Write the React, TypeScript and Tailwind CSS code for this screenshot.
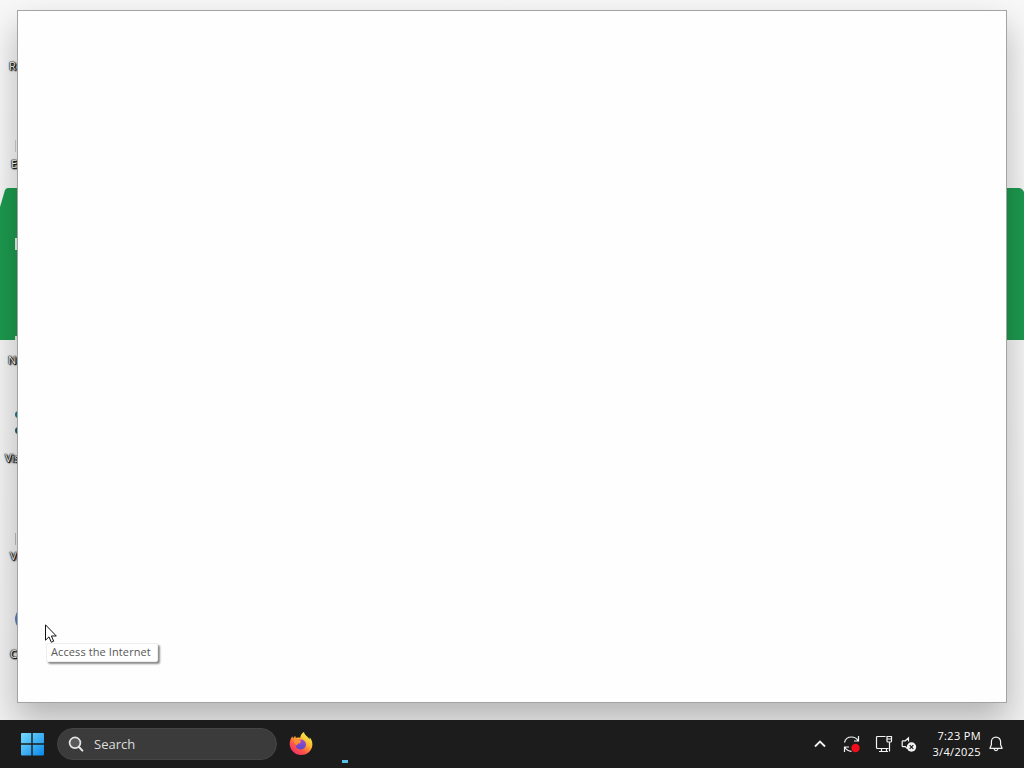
type DesktopLabel = {
  text: string;
  className: string;
};

const labels: DesktopLabel[] = [
  { text: 'Recycle Bin', className: 'left-[9px] top-[59px]' },
  { text: 'EULA', className: 'left-[11px] top-[157px]' },
  { text: 'Network', className: 'left-[8px] top-[353px]' },
  { text: 'Visit site', className: 'left-[5px] top-[451px]' },
  { text: 'VLC', className: 'left-[10px] top-[549px]' },
  { text: 'Chrome', className: 'left-[10px] top-[647px]' },
];

function Wallpaper() {
  return (
    <svg className="absolute inset-0" width="1024" height="720" viewBox="0 0 1024 720">
      <defs>
        <linearGradient id="sky" x1="0" y1="0" x2="0" y2="1">
          <stop offset="0" stopColor="#f8f8f8" />
          <stop offset="1" stopColor="#f1f1f1" />
        </linearGradient>
      </defs>
      <rect width="1024" height="720" fill="url(#sky)" />
      <path d="M0 207 5 190q1-2 3-2H1019q3 0 5 4V340H0Z" fill="#1d994f" />
    </svg>
  );
}

function DesktopIcons() {
  return (
    <>
      {labels.map((label) => (
        <span
          key={label.text}
          className={`absolute whitespace-nowrap text-[11px] leading-[14px] text-white [text-shadow:0_0_1px_#000,0_0_1px_#000,0_0_2px_#000,1px_1px_1px_#000,1px_1px_2px_#000] ${label.className}`}
        >
          {label.text}
        </span>
      ))}
      <div className="absolute left-[15px] top-[140px] h-3 w-px bg-[#cfcfcf]" />
      <div className="absolute left-[15px] top-[238px] h-3 w-1 bg-[#e4f3e9]" />
      <div className="absolute left-[15px] top-[336px] h-1 w-1 bg-[#d5efdf]" />
      <div className="absolute left-[15px] top-[411px] h-[7px] w-1 rounded-l-full bg-[#177f86]" />
      <div className="absolute left-[15px] top-[427px] h-[7px] w-1 rounded-l-full bg-[#245f68]" />
      <div className="absolute left-[15px] top-[533px] h-3 w-px bg-[#bdbdbd]" />
      <div className="absolute left-[15px] top-[607px] h-6 w-6 rounded-full bg-[#5b7fcb]" />
    </>
  );
}

function Pointer() {
  return (
    <svg className="absolute left-[45px] top-[624px]" width="12" height="20" viewBox="0 0 12 20">
      <path
        d="M.5.8v15.4l3.5-3.3 2.3 5.3 2.4-1-2.3-5.2h4.9Z"
        fill="#fff"
        stroke="#111"
        strokeWidth="1"
      />
    </svg>
  );
}

function WindowsLogo() {
  return (
    <svg width="24" height="24" viewBox="0 0 24 24">
      <defs>
        <linearGradient id="win" x1="0" y1="0" x2="24" y2="24" gradientUnits="userSpaceOnUse">
          <stop offset="0" stopColor="#7be0fc" />
          <stop offset="1" stopColor="#0a86ea" />
        </linearGradient>
      </defs>
      <path
        d="M2 1h9.3v10.3H1V2q0-1 1-1ZM12.7 1H23q1 0 1 1v9.3H12.7ZM1 12.7h10.3V23.500H2q-1 0-1-1ZM12.7 12.7H24V22.500q0 1-1 1H12.7Z"
        fill="url(#win)"
      />
    </svg>
  );
}

function SearchIcon() {
  return (
    <svg width="16" height="16" viewBox="0 0 16 16" fill="none" stroke="#e6e6e6">
      <circle cx="7" cy="6.8" r="5.4" fill="#5a5a5a" strokeWidth="1.7" />
      <path d="m11 11 3.4 3.6" strokeWidth="2" strokeLinecap="round" />
    </svg>
  );
}

function Firefox() {
  return (
    <svg width="24" height="24" viewBox="0 0 24 24">
      <defs>
        <linearGradient id="fox" x1="19" y1="3" x2="5" y2="22" gradientUnits="userSpaceOnUse">
          <stop offset="0" stopColor="#f2f04a" />
          <stop offset="0.35" stopColor="#ffb02e" />
          <stop offset="0.65" stopColor="#ff5a45" />
          <stop offset="1" stopColor="#f02a68" />
        </linearGradient>
        <linearGradient id="globe" x1="0" y1="0" x2="0" y2="1">
          <stop offset="0" stopColor="#a34bd0" />
          <stop offset="1" stopColor="#5548c8" />
        </linearGradient>
      </defs>
      <path
        d="M3.3 4.2c.3 1 .6 1.5 1 2 .4-.9 1-1.8 2-2.5 0 1 .2 1.800.6 2.300 1.400-.5 3-.5 4.300-.1C11.200 3.500 12.800 1.200 15 0c.2 2.200 1.700 3.200 3.400 4.700 1 .9 1.600 1.800 2 2.800l.4-2.200C23 8.200 23.900 11.500 23.200 14.500c-1.200 5.200-5.700 8.500-11 8.500C6 23 .8 18.200.7 12c0-2.900.9-5.800 2.600-7.800Z"
        fill="url(#fox)"
      />
      <path
        d="M8 9c1.700-1.700 5.300-2 7.300-.2 2.200 2 2.300 5.200.2 7.200-2.300 2-6 1.800-7.800-.3-1.100-1.300-1.200-2.500-.8-3.700l4.300-.8c.5-1-.4-1.800-3.200-2.200Z"
        fill="url(#globe)"
      />
      <path d="M4.500 8c1.500-1.200 3.300-1.400 4.600-.4l3 1.200c-.2 1.300-1.200 1.900-2.700 2-1 .6-1.300 1.600-.8 2.800-2-.6-3.400-2.600-4.100-5.600Z" fill="#ff9130" />
    </svg>
  );
}

function UpdateIcon() {
  return (
    <svg width="18" height="18" viewBox="0 0 18 18" fill="none" stroke="#f2f2f2" strokeWidth="1.2">
      <path d="M1.500 7.500C2.300 4 5.100 2 8.500 2c3 0 5 1.300 6.400 3.500M15.500 1v5h-4.500M1.500 17v-5h4.500M2 12.500c1.300 2.300 3.500 3.800 6.500 3.800" />
      <circle cx="12.500" cy="13" r="4.200" fill="#f20d1c" stroke="none" />
    </svg>
  );
}

function NetworkIcon() {
  return (
    <svg width="18" height="18" viewBox="0 0 18 18" fill="none" stroke="#f2f2f2" strokeWidth="1.2">
      <path d="M10.500 1.500H2.500q-1 0-1 1v10q0 1 1 1h11M4 16.500h9M6.500 13.500v3M11.500 13.500v3" />
      <path d="M12 1.500h4.500V6q0 1-1 1H13q-1 0-1-1ZM12 4h4.500M14.500 7v9.500" />
    </svg>
  );
}

function VolumeIcon() {
  return (
    <svg width="16" height="16" viewBox="0 0 16 16" fill="none" stroke="#f2f2f2">
      <path d="M7.500 5.500V1.800L4.300 4.800H2q-.8 0-.8.8v4.300q0 .8.8.8h2.300l2 2" strokeWidth="1.2" />
      <circle cx="10.500" cy="11" r="4.700" fill="#f2f2f2" stroke="none" />
      <path d="m8.700 9.200 3.600 3.600M12.300 9.200l-3.600 3.600" stroke="#1c1c1c" strokeWidth="1.2" />
    </svg>
  );
}

function BellIcon() {
  return (
    <svg width="14" height="16" viewBox="0 0 14 16" fill="none" stroke="#f2f2f2" strokeWidth="1.2" strokeLinejoin="round">
      <path d="M7 1.200c-2.800 0-4.600 2-4.600 4.600v3L.9 12.300h12.200l-1.500-3.500v-3c0-2.600-1.800-4.600-4.600-4.600ZM5 12.500c.2 1.400.9 2.100 2 2.100s1.800-.7 2-2.100" />
    </svg>
  );
}

function Taskbar() {
  return (
    <div className="flex h-12 items-center bg-[#1c1c1c] text-white">
      <div className="ml-5">
        <WindowsLogo />
      </div>
      <div className="ml-[13px] flex h-8 w-[220px] items-center rounded-full border border-[#454545] bg-[#3b3b3b] pl-[10px]">
        <SearchIcon />
        <span className="ml-[10px] pt-px text-[13px] text-[#dedede]">Search</span>
      </div>
      <div className="ml-3">
        <Firefox />
      </div>
      <div className="mb-[5px] ml-[29px] h-[3px] w-[6px] self-end bg-[#58bfe8]" />
      <div className="ml-auto flex items-center pr-[21px]">
        <svg width="12" height="8" viewBox="0 0 12 8" fill="none" stroke="#f2f2f2" strokeWidth="1.8">
          <path d="m1 6.500 5-5 5 5" />
        </svg>
        <div className="ml-[17px]">
          <UpdateIcon />
        </div>
        <div className="ml-[14px]">
          <NetworkIcon />
        </div>
        <div className="ml-2">
          <VolumeIcon />
        </div>
        <div className="ml-[13px] flex w-[51px] flex-col items-end whitespace-nowrap text-[11px] leading-4 tracking-[0.35px]">
          <div>7:23 PM</div>
          <div>3/4/2025</div>
        </div>
        <div className="ml-2">
          <BellIcon />
        </div>
      </div>
    </div>
  );
}

export default function App() {
  return (
    <div className="flex h-[768px] w-[1024px] flex-col overflow-hidden font-['Open_Sans','Noto_Sans',sans-serif]">
      <div className="relative h-[720px] overflow-hidden">
        <Wallpaper />
        <DesktopIcons />
        <div className="absolute left-[17px] top-[10px] h-[693px] w-[990px] border border-[#a3a3a3] bg-[#fefefe] shadow-[0_16px_32px_rgba(0,0,0,0.26)]" />
        <div className="absolute left-[46px] top-[643px] flex h-[19px] w-[112px] items-center whitespace-nowrap rounded-[2px] border border-[#eeeeee] bg-white pl-1 text-[11px] tracking-[0.1px] text-[#575757] shadow-[2px_2px_2px_rgba(0,0,0,0.45)]">
          Access the Internet
        </div>
        <Pointer />
      </div>
      <Taskbar />
    </div>
  );
}
